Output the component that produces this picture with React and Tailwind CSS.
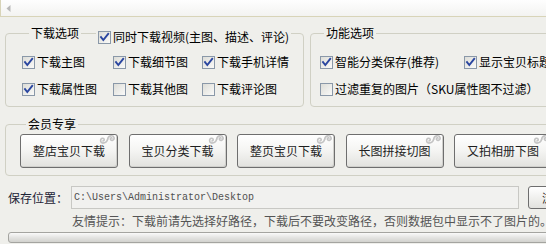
import React from 'react';

const PAGE_BG = 'bg-[#efefeb]';

// XP 风格复选框
const Box = ({ checked }) => (
  <svg width="13" height="13" viewBox="0 0 13 13" className="shrink-0">
    <defs>
      <linearGradient id="cbfill" x1="0" y1="0" x2="1" y2="1">
        <stop offset="0" stopColor="#dcdcd6" />
        <stop offset="1" stopColor="#fbfbfa" />
      </linearGradient>
    </defs>
    <rect x="0.5" y="0.5" width="12" height="12" fill="url(#cbfill)" stroke="#8a98a8" />
    {checked && (
      <path d="M3 6.2 L5.3 9 L10.2 2.8" fill="none" stroke="#2a46a0" strokeWidth="1.9" strokeLinecap="square" />
    )}
  </svg>
);

const Check = ({ checked, children }) => (
  <label className="flex items-center gap-[2px] whitespace-nowrap">
    <Box checked={checked} />
    <span>{children}</span>
  </label>
);

// 按钮右上角的祥云花纹
const Cloud = () => (
  <svg width="17" height="13" viewBox="0 0 17 13" className="absolute right-[1px] top-[-2px]">
    <g fill="none" stroke="#c4c4c4" strokeWidth="1.6" strokeLinecap="round">
      <path d="M4 10 C1 10 0.8 5.5 3.6 5.3 C5.6 5.2 5.8 8 3.9 8" />
      <path d="M4 10 C6.5 10 8 8.5 8.6 6.5" />
      <path d="M8.6 6.5 C9 2.5 14 1.5 15 4.5 C15.8 7.2 12 8.3 11.4 6.3 C11 5 12.5 4.3 13 5.2" />
    </g>
  </svg>
);

const VipButton = ({ children }) => (
  <button className="relative w-[98px] h-[34px] shrink-0 rounded-[3px] border border-[#6e6e6e] bg-gradient-to-b from-[#ffffff] via-[#f4f4f2] to-[#e2e2de] text-[#1e1e1e] shadow-[inset_-1px_-1px_0_#d0d0cc]">
    {children}
    <Cloud />
  </button>
);

export default function App() {
  const buttons = ['整店宝贝下载', '宝贝分类下载', '整页宝贝下载', '长图拼接切图', '又拍相册下图'];

  return (
    <div className={`w-[546px] h-[244px] overflow-hidden ${PAGE_BG} text-[12px] leading-[14px] text-black font-['Noto_Sans_CJK_SC','Noto_Sans',sans-serif]`}>
      {/* 顶部滚动条 */}
      <div className="h-[17px] border-l border-b border-[#d8d4b8] bg-gradient-to-b from-[#fefefe] to-[#f3f3f1] flex items-center pl-[5px]">
        <svg width="5" height="7" viewBox="0 0 5 7">
          <path d="M4.5 0 L0.5 3.5 L4.5 7 Z" fill="#b9b9b9" />
        </svg>
      </div>

      {/* 下载选项 / 功能选项 */}
      <div className="flex gap-[6px] pl-[5px] mt-[9px] w-max">
        <div className="relative">
          <fieldset className="w-[299px] border border-[#d0d0c4] rounded-[4px] pl-[16px] pt-[15px] pb-[10px]">
            <legend className="ml-[7px] px-[2px]">下载选项</legend>
            <div className="grid grid-cols-[91px_89px_auto] gap-y-[13px]">
              <Check checked>下载主图</Check>
              <Check checked>下载细节图</Check>
              <Check checked>下载手机详情</Check>
              <Check checked>下载属性图</Check>
              <Check>下载其他图</Check>
              <Check>下载评论图</Check>
            </div>
          </fieldset>
          <div className={`absolute left-[91px] top-[4px] px-[2px] ${PAGE_BG}`}>
            <Check checked>同时下载视频(主图、描述、评论)</Check>
          </div>
        </div>

        <fieldset className="w-[270px] border border-[#d0d0c4] rounded-[4px] pl-[9px] pt-[15px] pb-[10px]">
          <legend className="ml-[4px] px-[2px]">功能选项</legend>
          <div className="flex flex-col gap-[13px]">
            <div className="flex">
              <div className="w-[144px]">
                <Check checked>智能分类保存(推荐)</Check>
              </div>
              <Check checked>显示宝贝标题</Check>
            </div>
            <Check>过滤重复的图片（SKU属性图不过滤）</Check>
          </div>
        </fieldset>
      </div>

      {/* 会员专享 */}
      <div className="pl-[5px] mt-[10px] w-max">
        <fieldset className="w-[570px] border border-[#d0d0c4] rounded-[4px] pl-[14px] pt-[3px] pb-[7px]">
          <legend className="ml-[6px] px-[2px]">会员专享</legend>
          <div className="flex gap-[10.5px]">
            {buttons.map((b) => (
              <VipButton key={b}>{b}</VipButton>
            ))}
          </div>
        </fieldset>
      </div>

      {/* 保存位置 */}
      <div className="flex items-center mt-[10px] pl-[8px] w-max">
        <span className="w-[63px] text-[#1c2336]">保存位置：</span>
        <div className="w-[448px] h-[23px] border border-[#c8c8c4] bg-[#f1f1ef] flex items-center pl-[2px] font-['Liberation_Mono',monospace] text-[10px] text-[#505050]">
          C:\Users\Administrator\Desktop
        </div>
        <button className="ml-[9px] w-[52px] h-[23px] rounded-[3px] border border-[#6e6e6e] bg-gradient-to-b from-[#ffffff] to-[#e2e2de] text-[#1e1e1e]">
          浏览
        </button>
      </div>

      <div className="mt-[5px] pl-[72px] whitespace-nowrap text-[#555555]">
        友情提示：下载前请先选择好路径，下载后不要改变路径，否则数据包中显示不了图片的。请注意
      </div>

      {/* 进度条 */}
      <div className="mt-[4px] ml-[8px] w-[560px] h-[11px] rounded-[3px] border border-[#a4a4a0] bg-gradient-to-b from-[#fafafa] via-[#e4e4e2] to-[#d2d2ce]" />
    </div>
  );
}
